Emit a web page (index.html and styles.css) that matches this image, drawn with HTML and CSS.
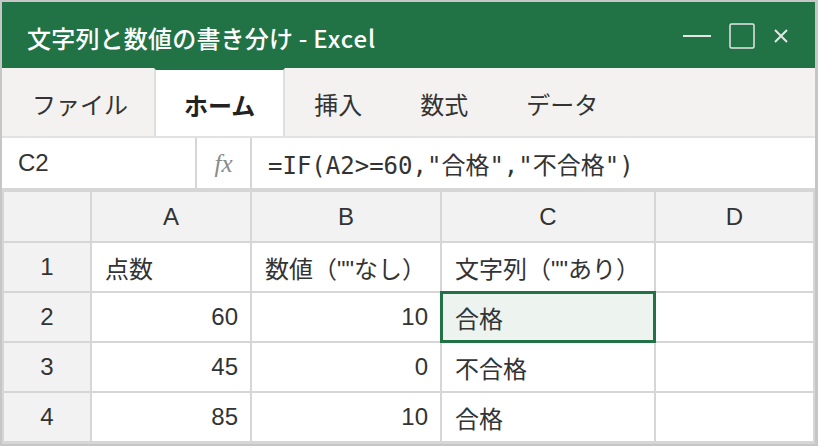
FILE: index.html
```html
<!DOCTYPE html>
<html lang="ja">
<head>
<meta charset="utf-8">
<title>文字列と数値の書き分け - Excel</title>
<link rel="stylesheet" href="styles.css">
</head>
<body>
<div class="window">
  <div class="titlebar">
    <div class="title">文字列と数値の書き分け - <span class="latin">Excel</span></div>
    <div class="controls">
      <svg class="ic-min" width="28" height="4" viewBox="0 0 28 4"><line x1="0" y1="2" x2="28" y2="2" stroke="#e6e6e6" stroke-width="2"/></svg>
      <svg class="ic-max" width="26" height="26" viewBox="0 0 26 26"><rect x="1" y="1" width="24" height="24" rx="1.5" fill="none" stroke="#e6e6e6" stroke-width="1.5"/></svg>
      <svg class="ic-close" width="14" height="14" viewBox="0 0 14 14"><path d="M1 1 L13 13 M13 1 L1 13" stroke="#e6e6e6" stroke-width="2" fill="none"/></svg>
    </div>
  </div>
  <div class="tabs">
    <div class="tab tab-file">ファイル</div>
    <div class="tab active">ホーム</div>
    <div class="tab">挿入</div>
    <div class="tab">数式</div>
    <div class="tab">データ</div>
  </div>
  <div class="fbar">
    <div class="namebox">C2</div>
    <div class="fx">fx</div>
    <div class="formula">=IF(A2&gt;=60,"合格","不合格")</div>
  </div>
  <div class="grid">
    <div class="hd"></div>
    <div class="hd">A</div>
    <div class="hd">B</div>
    <div class="hd">C</div>
    <div class="hd">D</div>

    <div class="rh">1</div>
    <div class="cell">点数</div>
    <div class="cell">数値（""なし）</div>
    <div class="cell">文字列（""あり）</div>
    <div class="cell"></div>

    <div class="rh">2</div>
    <div class="cell num">60</div>
    <div class="cell num">10</div>
    <div class="cell sel">合格</div>
    <div class="cell"></div>

    <div class="rh">3</div>
    <div class="cell num">45</div>
    <div class="cell num">0</div>
    <div class="cell">不合格</div>
    <div class="cell"></div>

    <div class="rh">4</div>
    <div class="cell num">85</div>
    <div class="cell num">10</div>
    <div class="cell">合格</div>
    <div class="cell"></div>
  </div>
</div>
</body>
</html>
```

FILE: styles.css
```css
html, body {
  margin: 0;
  padding: 0;
}
body {
  background: #c6c6c6;
  width: 818px;
  height: 446px;
  overflow: hidden;
  font-family: "Liberation Sans", "Noto Sans CJK JP", sans-serif;
  color: #333;
}
.window {
  margin: 2px 0 0 2px;
  width: 813px;
  height: 442px;
  background: #d6d6d6;
  display: flex;
  flex-direction: column;
}
.titlebar {
  height: 66px;
  background: #217346;
  display: flex;
  align-items: center;
  justify-content: space-between;
  padding: 0 27px 0 25px;
}
.title {
  color: #fff;
  font-family: "Noto Sans CJK JP", "Noto Sans", sans-serif;
  font-size: 24px;
  font-weight: 500;
  padding-top: 4px;
  letter-spacing: 0.2px;
  white-space: nowrap;
}
.title .latin {
  letter-spacing: 1px;
}
.controls {
  display: flex;
  align-items: center;
  padding-top: 2px;
}
.ic-min { margin-right: 18px; }
.ic-max { margin-right: 19px; }
.controls svg { display: block; }

.tabs {
  height: 68px;
  background: #f3f2f1;
  border-bottom: 2px solid #e2e2e2;
  display: flex;
  align-items: stretch;
}
.tab {
  padding: 2px 29px 0 29px;
  font-family: "Noto Sans CJK JP", sans-serif;
  font-size: 24px;
  display: flex;
  align-items: center;
  color: #333;
  white-space: nowrap;
}
.tab-file {
  padding-left: 30px;
  padding-right: 26px;
}
.tab.active {
  background: #fff;
  font-weight: 700;
  color: #222;
  padding-left: 28px;
  padding-right: 28px;
  border-left: 2px solid #dedede;
  border-right: 2px solid #dedede;
  border-top: 2px solid #217346;
}

.fbar {
  height: 50px;
  background: #fff;
  border-bottom: 4px solid #d6d6d6;
  display: flex;
}
.namebox {
  width: 177px;
  padding-left: 16px;
  border-right: 2px solid #d6d6d6;
  display: flex;
  align-items: center;
  font-size: 24px;
  color: #333;
}
.fx {
  width: 55px;
  border-right: 2px solid #d6d6d6;
  display: flex;
  align-items: center;
  justify-content: center;
  font-family: "Liberation Serif", "DejaVu Serif", serif;
  font-style: italic;
  font-size: 25px;
  color: #8a8a8a;
  padding-top: 2px;
  box-sizing: border-box;
}
.formula {
  padding-left: 16px;
  display: flex;
  align-items: center;
  font-family: "DejaVu Sans Mono", "Noto Sans CJK JP", monospace;
  font-size: 24px;
  color: #333;
  white-space: nowrap;
}

.grid {
  flex: 1;
  display: grid;
  grid-template-columns: 86px 158px 188px 212px 157px;
  grid-template-rows: 49px repeat(4, 48px);
  gap: 2px;
  padding: 0 2px 2px 2px;
  background: #d6d6d6;
}
.hd, .rh {
  background: #f2f2f2;
  display: flex;
  align-items: center;
  justify-content: center;
  font-size: 24px;
  color: #333;
}
.cell {
  background: #fff;
  display: flex;
  align-items: center;
  padding: 0 12px 0 13px;
  font-size: 24px;
  color: #333;
  white-space: nowrap;
}
.cell.num {
  justify-content: flex-end;
}
.cell.sel {
  background: #edf3ee;
  position: relative;
  z-index: 1;
  outline: 3px solid #217346;
  outline-offset: -1px;
}
```
